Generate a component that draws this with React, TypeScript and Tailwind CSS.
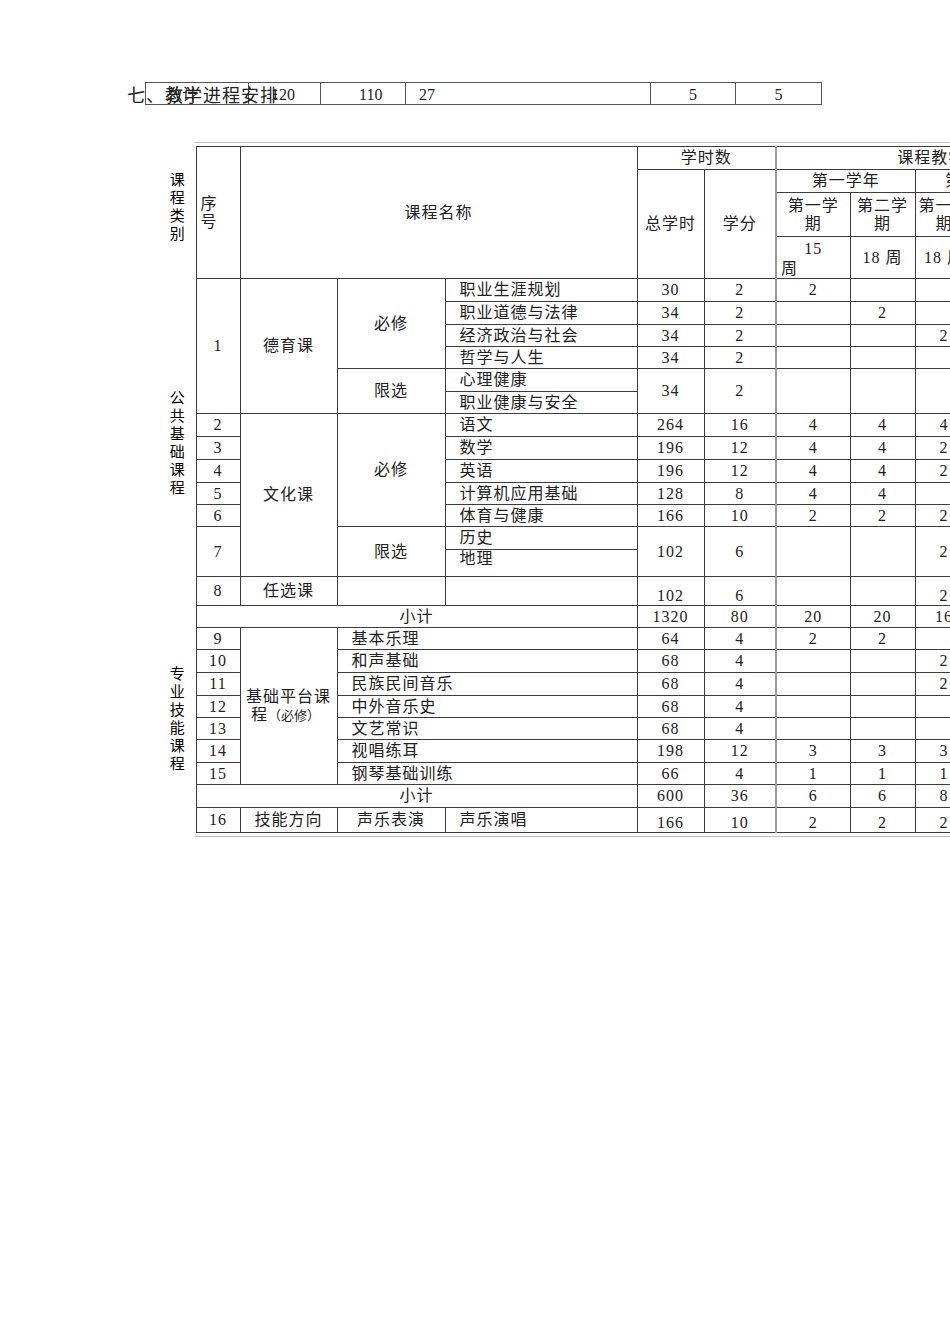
import React from 'react'

const font = "font-['Liberation_Serif','Noto_Sans_CJK_SC',serif]"
const cell = 'border border-[#3c3c3c] p-0 text-center align-middle'
const name = 'border border-[#3c3c3c] p-0 pl-[14px] text-left align-middle'

const Vert = ({ text }: { text: string }) => (
  <div className="flex flex-col items-center font-['Noto_Sans_CJK_SC',sans-serif] text-[15px] leading-[18px] text-black">
    {text.split('').map((c, i) => (
      <span key={i}>{c}</span>
    ))}
  </div>
)

// total hours, credits, then six semester columns
const Data = ({ total, credit, sems, rowSpan, bottom }: { total?: string; credit?: string; sems: string[]; rowSpan?: number; bottom?: boolean }) => {
  const cls = bottom ? cell.replace('align-middle', 'align-bottom') : cell
  const all = [...sems, '', '', '', '', '', ''].slice(0, 6)
  return (
    <>
      <td rowSpan={rowSpan} className={cls}>{total}</td>
      <td rowSpan={rowSpan} className={cls}>{credit}</td>
      {all.map((s, i) => (
        <td key={i} rowSpan={rowSpan} className={cls + (i === 0 ? ' border-l-[#9a9a9a] border-l-2' : '')}>
          {s}
        </td>
      ))}
    </>
  )
}

export default function App() {
  return (
    <div className={`relative h-[1344px] w-[950px] overflow-hidden bg-white text-[16px] text-[#222] ${font}`}>
      {/* top summary row */}
      <div className="pl-[145px] pt-[82px]">
        <div className="flex h-[23px] w-[677px] border border-[#555] leading-[23px]">
          <div className="w-[103px] border-r border-[#555] pl-[20px]">总计</div>
          <div className="w-[72px] border-r border-[#555] pl-[22px]">120</div>
          <div className="w-[85px] border-r border-[#555] pl-[38px]">110</div>
          <div className="w-[245px] border-r border-[#555] pl-[13px]">27</div>
          <div className="w-[85px] border-r border-[#555] text-center">5</div>
          <div className="flex-1 text-center">5</div>
        </div>
      </div>
      <div className="absolute left-[127px] top-[84px] bg-transparent text-[18px] leading-[24px] tracking-[1px] text-[#222]">
        七、教学进程安排
      </div>

      {/* main table */}
      <div className="pl-[160px] pt-[37px]">
        <div className="ml-[35px] h-[4px] w-[1000px] border-t border-[#bdbdbd]" />
        <table className="w-[994px] table-fixed border-collapse leading-[18px] tracking-[1px]">
          <colgroup>
            <col className="w-[36px]" />
            <col className="w-[44px]" />
            <col className="w-[97px]" />
            <col className="w-[108px]" />
            <col className="w-[192px]" />
            <col className="w-[67px]" />
            <col className="w-[72px]" />
            <col className="w-[74px]" />
            <col className="w-[65px]" />
            <col className="w-[58px]" />
            <col className="w-[70px]" />
            <col className="w-[55px]" />
            <col className="w-[56px]" />
          </colgroup>
          <tbody>
            <tr className="h-[23px]">
              <td rowSpan={4} className="p-0 pb-[14px] align-middle">
                <Vert text="课程类别" />
              </td>
              <td rowSpan={4} className={cell + ' pl-[4px] text-left'}>
                序<br />号
              </td>
              <td rowSpan={4} colSpan={3} className={cell}>课程名称</td>
              <td colSpan={2} className={cell}>学时数</td>
              <td colSpan={6} className={cell + ' border-l-2 border-l-[#9a9a9a]'}>课程教学时间安排</td>
            </tr>
            <tr className="h-[23px]">
              <td rowSpan={3} className={cell}>总学时</td>
              <td rowSpan={3} className={cell}>学分</td>
              <td colSpan={2} className={cell + ' border-l-2 border-l-[#9a9a9a]'}>第一学年</td>
              <td colSpan={2} className={cell}>第二学年</td>
              <td colSpan={2} className={cell}>第三学年</td>
            </tr>
            <tr className="h-[44px]">
              <td className={cell + ' border-l-2 border-l-[#9a9a9a]'}>第一学<br />期</td>
              <td className={cell}>第二学<br />期</td>
              <td className={cell}>第一学<br />期</td>
              <td className={cell}>第二学<br />期</td>
              <td className={cell}>第一学<br />期</td>
              <td className={cell}>第二学<br />期</td>
            </tr>
            <tr className="h-[42px]">
              <td className={cell + ' border-l-2 border-l-[#9a9a9a]'}>
                <div className="leading-[22px]">15</div>
                <div className="pl-[4px] text-left leading-[18px]">周</div>
              </td>
              <td className={cell}>18 周</td>
              <td className={cell}>18 周</td>
              <td className={cell}>18 周</td>
              <td className={cell}>18 周</td>
              <td className={cell}>18 周</td>
            </tr>

            {/* 德育课 */}
            <tr className="h-[23px]">
              <td rowSpan={14} className="p-0 align-middle">
                <Vert text="公共基础课程" />
              </td>
              <td rowSpan={6} className={cell}>1</td>
              <td rowSpan={6} className={cell}>德育课</td>
              <td rowSpan={4} className={cell}>必修</td>
              <td className={name}>职业生涯规划</td>
              <Data total="30" credit="2" sems={['2']} />
            </tr>
            <tr className="h-[23px]">
              <td className={name}>职业道德与法律</td>
              <Data total="34" credit="2" sems={['', '2']} />
            </tr>
            <tr className="h-[22px]">
              <td className={name}>经济政治与社会</td>
              <Data total="34" credit="2" sems={['', '', '2']} />
            </tr>
            <tr className="h-[22px]">
              <td className={name}>哲学与人生</td>
              <Data total="34" credit="2" sems={[]} />
            </tr>
            <tr className="h-[23px]">
              <td rowSpan={2} className={cell}>限选</td>
              <td className={name}>心理健康</td>
              <Data total="34" credit="2" sems={[]} rowSpan={2} />
            </tr>
            <tr className="h-[22px]">
              <td className={name + ' align-bottom'}>职业健康与安全</td>
            </tr>

            {/* 文化课 */}
            <tr className="h-[23px]">
              <td className={cell}>2</td>
              <td rowSpan={7} className={cell}>文化课</td>
              <td rowSpan={5} className={cell}>必修</td>
              <td className={name}>语文</td>
              <Data total="264" credit="16" sems={['4', '4', '4']} />
            </tr>
            <tr className="h-[23px]">
              <td className={cell}>3</td>
              <td className={name}>数学</td>
              <Data total="196" credit="12" sems={['4', '4', '2']} />
            </tr>
            <tr className="h-[23px]">
              <td className={cell}>4</td>
              <td className={name}>英语</td>
              <Data total="196" credit="12" sems={['4', '4', '2']} />
            </tr>
            <tr className="h-[22px]">
              <td className={cell}>5</td>
              <td className={name}>计算机应用基础</td>
              <Data total="128" credit="8" sems={['4', '4']} />
            </tr>
            <tr className="h-[22px]">
              <td className={cell}>6</td>
              <td className={name}>体育与健康</td>
              <Data total="166" credit="10" sems={['2', '2', '2']} />
            </tr>
            <tr className="h-[23px]">
              <td rowSpan={2} className={cell}>7</td>
              <td rowSpan={2} className={cell}>限选</td>
              <td className={name + ' align-bottom'}>历史</td>
              <Data total="102" credit="6" sems={['', '', '2']} rowSpan={2} />
            </tr>
            <tr className="h-[27px]">
              <td className={name + ' align-top'}>地理</td>
            </tr>
            <tr className="h-[29px]">
              <td className={cell + ' align-bottom'}>8</td>
              <td className={cell}>任选课</td>
              <td className={cell} />
              <td className={cell} />
              <Data total="102" credit="6" sems={['', '', '2']} bottom />
            </tr>
            <tr className="h-[22px]">
              <td className="p-0" />
              <td colSpan={4} className={cell}>小计</td>
              <Data total="1320" credit="80" sems={['20', '20', '16']} />
            </tr>

            {/* 基础平台课程 */}
            <tr className="h-[22px]">
              <td rowSpan={8} className="p-0 align-middle">
                <Vert text="专业技能课程" />
              </td>
              <td className={cell}>9</td>
              <td rowSpan={7} className={cell}>
                基础平台课
                <br />
                <span className="inline-block pr-[6px]">
                  程<span className="text-[13px] tracking-normal">（必修）</span>
                </span>
              </td>
              <td colSpan={2} className={name}>基本乐理</td>
              <Data total="64" credit="4" sems={['2', '2']} />
            </tr>
            <tr className="h-[23px]">
              <td className={cell}>10</td>
              <td colSpan={2} className={name}>和声基础</td>
              <Data total="68" credit="4" sems={['', '', '2']} />
            </tr>
            <tr className="h-[23px]">
              <td className={cell}>11</td>
              <td colSpan={2} className={name}>民族民间音乐</td>
              <Data total="68" credit="4" sems={['', '', '2']} />
            </tr>
            <tr className="h-[22px]">
              <td className={cell}>12</td>
              <td colSpan={2} className={name}>中外音乐史</td>
              <Data total="68" credit="4" sems={[]} />
            </tr>
            <tr className="h-[22px]">
              <td className={cell}>13</td>
              <td colSpan={2} className={name}>文艺常识</td>
              <Data total="68" credit="4" sems={[]} />
            </tr>
            <tr className="h-[23px]">
              <td className={cell}>14</td>
              <td colSpan={2} className={name}>视唱练耳</td>
              <Data total="198" credit="12" sems={['3', '3', '3']} />
            </tr>
            <tr className="h-[22px]">
              <td className={cell}>15</td>
              <td colSpan={2} className={name}>钢琴基础训练</td>
              <Data total="66" credit="4" sems={['1', '1', '1']} />
            </tr>
            <tr className="h-[23px]">
              <td colSpan={4} className={cell}>小计</td>
              <Data total="600" credit="36" sems={['6', '6', '8']} />
            </tr>
            <tr className="h-[25px]">
              <td className="p-0" />
              <td className={cell + ' align-bottom'}>16</td>
              <td className={cell}>技能方向</td>
              <td className={cell}>声乐表演</td>
              <td className={name}>声乐演唱</td>
              <Data total="166" credit="10" sems={['2', '2', '2']} bottom />
            </tr>
          </tbody>
        </table>
        <div className="ml-[35px] mt-[3px] h-[4px] w-[1000px] border-t border-[#bdbdbd]" />
      </div>
    </div>
  )
}
